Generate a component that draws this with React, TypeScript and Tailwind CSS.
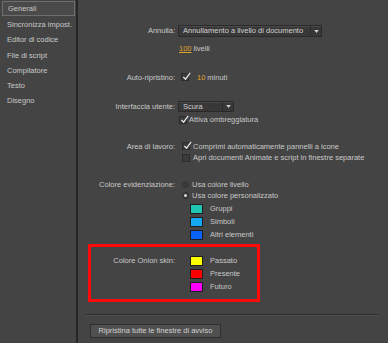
import React from "react";

const font = { fontFamily: '"Liberation Sans", Arial, sans-serif' };

const sidebarItems = [
  "Generali",
  "Sincronizza impost.",
  "Editor di codice",
  "File di script",
  "Compilatore",
  "Testo",
  "Disegno",
];

function Check({ checked = true }: { checked?: boolean }) {
  return (
    <span className="relative inline-block w-[8px] h-[8px] bg-[#3a3a3a] border border-[#2c2c2c] shrink-0">
      {checked && (
        <svg viewBox="0 0 10 10" className="absolute left-[0px] top-[-2px] w-[9px] h-[9px]">
          <path d="M1.5 5.5 L4 8 L9 1" fill="none" stroke="#e6e6e6" strokeWidth="1.4" />
        </svg>
      )}
    </span>
  );
}

function Radio({ on = false }: { on?: boolean }) {
  return (
    <span className="flex items-center justify-center w-[7px] h-[7px] rounded-full bg-[#3a3a3a] border border-[#333] shrink-0">
      {on && <span className="w-[3px] h-[3px] rounded-full bg-[#d8d8d8]" />}
    </span>
  );
}

function Select({ value, width }: { value: string; width: string }) {
  return (
    <div className={`flex items-stretch h-full bg-[#383838] border border-[#2a2a2a] shadow-[inset_0_1px_0_#4a4a4a] ${width}`}>
      <span className="flex-1 pl-[4px] flex items-center text-[#d2d2d2]">{value}</span>
      <span className="w-[11px] border-l border-[#2c2c2c] flex items-center justify-center">
        <svg viewBox="0 0 6 4" className="w-[5px] h-[3px]">
          <path d="M0 0 H6 L3 4 Z" fill="#d0d0d0" />
        </svg>
      </span>
    </div>
  );
}

function Swatch({ color, label }: { color: string; label: string }) {
  return (
    <div className="flex items-center h-[13px]">
      <span className={`w-[13px] h-[10px] border border-[#1e1e1e] ${color}`} />
      <span className="ml-[7px]">{label}</span>
    </div>
  );
}

export default function App() {
  return (
    <div
      style={font}
      className="w-[388px] h-[343px] bg-[#444444] flex text-[7.5px] text-[#c8c8c8] leading-none overflow-hidden"
    >
      {/* Sidebar */}
      <div className="w-[78px] shrink-0 border-r-2 border-[#262626] pt-[1px] pl-[2px] pr-[1px]">
        {sidebarItems.map((item, i) => (
          <div
            key={item}
            className={`h-[15.2px] flex items-center pl-[5px] ${
              i === 0 ? "border border-[#6e6e6e] bg-[#4a4a4a] h-[14px] mb-[1.2px] pl-[4px]" : ""
            }`}
          >
            {item}
          </div>
        ))}
      </div>

      {/* Main */}
      <div className="flex-1 flex flex-col">
        <div className="mt-[25px] h-[12px] flex items-center">
          <span className="w-[97px] text-right">Annulla:</span>
          <div className="ml-[3px] h-full">
            <Select value="Annullamento a livello di documento" width="w-[144px]" />
          </div>
        </div>
        <div className="mt-[6px] h-[12px] flex items-center pl-[101px]">
          <span className="text-[#e0a52c] underline">100</span>
          <span className="ml-[2px]">livelli</span>
        </div>

        <div className="mt-[17px] h-[12px] flex items-center">
          <span className="w-[97px] text-right">Auto-ripristino:</span>
          <span className="ml-[6px]"><Check /></span>
          <span className="ml-[8px] text-[#e0a52c]">10</span>
          <span className="ml-[2px]">minuti</span>
        </div>

        <div className="mt-[17px] h-[11px] flex items-center">
          <span className="w-[97px] text-right">Interfaccia utente:</span>
          <div className="ml-[3px] h-full">
            <Select value="Scura" width="w-[56px]" />
          </div>
        </div>
        <div className="mt-[2px] h-[12px] flex items-center pl-[101px]">
          <Check />
          <span className="ml-[2px]">Attiva ombreggiatura</span>
        </div>

        <div className="mt-[15px] h-[11px] flex items-center">
          <span className="w-[97px] text-right">Area di lavoro:</span>
          <span className="ml-[7px]"><Check /></span>
          <span className="ml-[3px]">Comprimi automaticamente pannelli a icone</span>
        </div>
        <div className="h-[11px] flex items-center pl-[104px]">
          <Check checked={false} />
          <span className="ml-[3px] whitespace-nowrap">Apri documenti Animate e script in finestre separate</span>
        </div>

        <div className="mt-[16px] h-[11px] flex items-center">
          <span className="w-[97px] text-right">Colore evidenziazione:</span>
          <span className="ml-[7px]"><Radio /></span>
          <span className="ml-[3px]">Usa colore livello</span>
        </div>
        <div className="h-[11px] flex items-center pl-[104px]">
          <Radio on />
          <span className="ml-[3px]">Usa colore personalizzato</span>
        </div>
        <div className="mt-[1px] pl-[112px] flex flex-col">
          <Swatch color="bg-[#20c4b2]" label="Gruppi" />
          <Swatch color="bg-[#14a9f2]" label="Simboli" />
          <Swatch color="bg-[#0a63f6]" label="Altri elementi" />
        </div>

        {/* Onion skin */}
        <div className="mt-[3px] ml-[10px] w-[172px] h-[58px] border-[3px] border-[#ff0a0a] flex pt-[7px]">
          <span className="w-[84px] h-[13px] flex items-center justify-end">Colore Onion skin:</span>
          <div className="ml-[15px] flex flex-col">
            <Swatch color="bg-[#ffff00]" label="Passato" />
            <Swatch color="bg-[#ff0000]" label="Presente" />
            <Swatch color="bg-[#ff00ff]" label="Futuro" />
          </div>
        </div>

        <div className="mt-[12px] ml-[8px] mr-[10px] h-px bg-[#2e2e2e] shadow-[0_1px_0_#505050]" />

        <div className="mt-[9px] ml-[12px]">
          <button className="w-[131px] h-[14px] bg-[#505050] border border-[#2e2e2e] text-[#d2d2d2] flex items-center justify-center">
            Ripristina tutte le finestre di avviso
          </button>
        </div>
      </div>
    </div>
  );
}
